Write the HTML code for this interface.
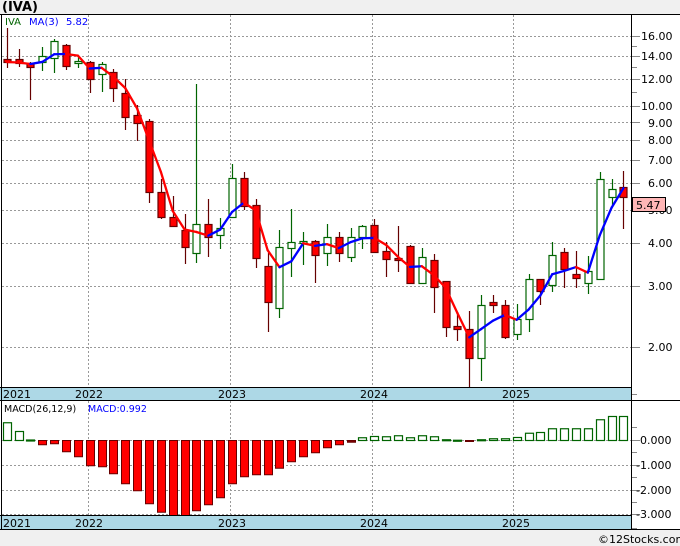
<!DOCTYPE html>
<html><head><meta charset="utf-8"><style>
html,body{margin:0;padding:0;background:#f0f0f0;}
svg{display:block;}
text{font-family:"DejaVu Sans","Liberation Sans",sans-serif;}
</style></head><body>
<svg id="s" width="680" height="546" xmlns="http://www.w3.org/2000/svg">
<rect x="0" y="0" width="680" height="546" fill="#f0f0f0"/>
<rect x="0" y="14" width="680" height="516" fill="#fff"/>
<text x="2" y="11" font-size="13" font-weight="bold" fill="#000">(IVA)</text>
<g id="grid" stroke="#999" stroke-width="1" stroke-dasharray="2,2"></g>
<g id="cand"></g>
<g id="ma" fill="none" stroke-width="2.3"></g>
<g id="macd"></g>
<rect x="0" y="387" width="632" height="14" fill="#add8e6"/>
<rect x="0" y="515" width="632" height="15" fill="#add8e6"/>
<g font-size="11" fill="#000">
<text x="3" y="398">2021</text><text x="75" y="398">2022</text><text x="218" y="398">2023</text><text x="360" y="398">2024</text><text x="502" y="398">2025</text>
<text x="3" y="527">2021</text><text x="75" y="527">2022</text><text x="218" y="527">2023</text><text x="360" y="527">2024</text><text x="502" y="527">2025</text>
</g>
<g stroke="#000" stroke-width="1" fill="none">
<line x1="0" y1="14.5" x2="680" y2="14.5"/>
<line x1="631.5" y1="14" x2="631.5" y2="530"/>
<line x1="0" y1="387.5" x2="632" y2="387.5"/>
<line x1="0" y1="400.5" x2="680" y2="400.5"/>
<line x1="0" y1="515.5" x2="632" y2="515.5"/>
<line x1="0" y1="529.5" x2="680" y2="529.5"/>
<line x1="1.5" y1="14" x2="1.5" y2="530"/>
</g>
<g id="ticks" stroke="#888" stroke-width="1"></g>
<g font-size="11" fill="#000">
<text x="641" y="40">16.00</text><text x="641" y="60">14.00</text><text x="641" y="83">12.00</text>
<text x="641" y="110">10.00</text><text x="648" y="127">9.00</text><text x="648" y="144">8.00</text>
<text x="648" y="164">7.00</text><text x="648" y="187">6.00</text><text x="648" y="214">5.00</text>
<text x="648" y="247">4.00</text><text x="648" y="290">3.00</text><text x="648" y="351">2.00</text>
<text x="640" y="444">0.000</text><text x="636" y="469">-1.000</text><text x="636" y="494">-2.000</text><text x="636" y="518">-3.000</text>
</g>
<rect x="632.5" y="197.5" width="33" height="14" fill="#ffb6b6" stroke="#000"/>
<text x="636" y="209" font-size="11" fill="#000">5.47</text>
<text x="5" y="25" font-size="10" fill="#006400">IVA</text>
<text x="29" y="25" font-size="10" fill="#0000ff">MA(3)</text>
<text x="66" y="25" font-size="10" fill="#0000ff">5.82</text>
<text x="4" y="412" font-size="9.5" fill="#000">MACD(26,12,9)</text>
<text x="88" y="412" font-size="9.5" fill="#0000ff">MACD:0.992</text>
<text x="598" y="543" font-size="11" fill="#000">©12Stocks.com</text>
</svg>
<script>
var NS="http://www.w3.org/2000/svg";
function el(p,t,a){var e=document.createElementNS(NS,t);for(var k in a)e.setAttribute(k,a[k]);document.getElementById(p).appendChild(e);return e;}
function yp(p){return 347-103.7*Math.log2(p/2);}
[16,14,12,10,9,8,7,6,5,4,3,2].forEach(function(p){var y=Math.round(yp(p))+.5;el("grid","line",{x1:2,y1:y,x2:631,y2:y});el("ticks","line",{x1:632,y1:y,x2:640,y2:y});});
[15,13,11].forEach(function(p){var y=Math.round(yp(p))+.5;el("ticks","line",{x1:632,y1:y,x2:637,y2:y});});
[440,465,490,514].forEach(function(y){el("grid","line",{x1:2,y1:y+.5,x2:631,y2:y+.5});el("ticks","line",{x1:632,y1:y+.5,x2:640,y2:y+.5});});
[427,452,477,502,528,394].forEach(function(y){el("ticks","line",{x1:632,y1:y+.5,x2:637,y2:y+.5});});
[88,230,372,513].forEach(function(x){el("grid","line",{x1:x+.5,y1:15,x2:x+.5,y2:387});el("grid","line",{x1:x+.5,y1:401,x2:x+.5,y2:515});});
var C=[[59,62,28,68,0],[59,63,49,67,0],[63,67,62,100,0],[56,62,47,71,1],[41,58,39,73,1],[45,66,44,70,0],[61,63,55,68,1],[62,79,61,93,0],[64,74,62,92,1],[72,88,69,102,0],[93,117,79,130,0],[115,123,105,141,0],[121,192,119,203,0],[192,217,179,219,0],[217,226,196,227,0],[230,247,214,264,0],[224,253,84,263,1],[224,237,199,257,0],[228,235,218,249,1],[178,217,164,217,1],[178,206,172,210,0],[205,258,199,268,0],[266,302,253,332,0],[247,308,230,318,1],[242,248,209,277,1],[241,243,232,265,1],[241,255,240,283,0],[237,253,224,266,1],[237,253,232,262,0],[237,257,228,262,1],[226,237,225,249,1],[225,252,219,252,0],[251,259,242,277,0],[258,260,226,272,0],[246,283,245,284,0],[257,283,248,283,1],[260,287,254,313,0],[281,327,281,337,0],[326,329,312,341,0],[329,358,311,387,0],[305,358,295,381,1],[302,305,295,313,0],[305,337,300,339,0],[319,334,304,340,1],[279,319,274,332,1],[279,291,279,305,0],[255,285,242,292,1],[252,269,248,288,0],[274,278,251,288,0],[271,283,256,294,1],[179,279,172,279,1],[189,197,179,205,1],[187,197,171,229,0]];
function cx(i){return 6.7+i*11.86;}
C.forEach(function(c,i){var x=cx(i),up=c[4];var wc=up?"#006400":"#660000";
el("cand","line",{x1:Math.round(x)+.5,y1:c[2],x2:Math.round(x)+.5,y2:c[3],stroke:wc,"stroke-width":1.2});
el("cand","rect",{x:Math.round(x)-3,y:c[0]+.5,width:7,height:Math.max(1,c[1]-c[0]),fill:up?"#fff":"#ff0000",stroke:up?"#006400":"#660000","stroke-width":1.2});});
var cl=C.map(function(c){var y=c[4]?c[0]:c[1];return 2*Math.pow(2,(347-y)/103.7);});
var ma=cl.map(function(v,i){var a=cl.slice(Math.max(0,i-2),i+1);return a.reduce(function(s,t){return s+t},0)/a.length;});
for(var i=1;i<ma.length;i++){el("ma","line",{x1:cx(i-1),y1:yp(ma[i-1]),x2:cx(i),y2:yp(ma[i]),stroke:ma[i]>=ma[i-1]?"#0000ff":"#ff0000","stroke-linecap":"round"});}
var M=[0.71,0.36,0.02,-0.17,-0.13,-0.45,-0.65,-1.01,-1.05,-1.33,-1.73,-2.01,-2.53,-2.87,-3.05,-3.0,-2.81,-2.57,-2.29,-1.73,-1.45,-1.37,-1.37,-1.11,-0.85,-0.65,-0.49,-0.29,-0.17,-0.07,0.11,0.16,0.15,0.19,0.11,0.19,0.15,0.03,0.01,-0.04,0.03,0.07,0.07,0.12,0.29,0.32,0.47,0.47,0.47,0.47,0.83,0.96,0.96];
M.forEach(function(v,i){var x=Math.round(cx(i))-3.5;var h=Math.abs(v)*25;var y=v>=0?440-h:440;
if(v<-2.99)h=Math.min(h,75);
if(v>=0)el("macd","rect",{x:x,y:y+.5,width:8,height:Math.max(1,h),fill:"#fff",stroke:"#006400","stroke-width":1.2});
else el("macd","rect",{x:x,y:440.5,width:8,height:Math.max(1,h),fill:v>-0.1?"#800000":"#ff0000",stroke:"#660000","stroke-width":1});});
</script>
</body></html>
